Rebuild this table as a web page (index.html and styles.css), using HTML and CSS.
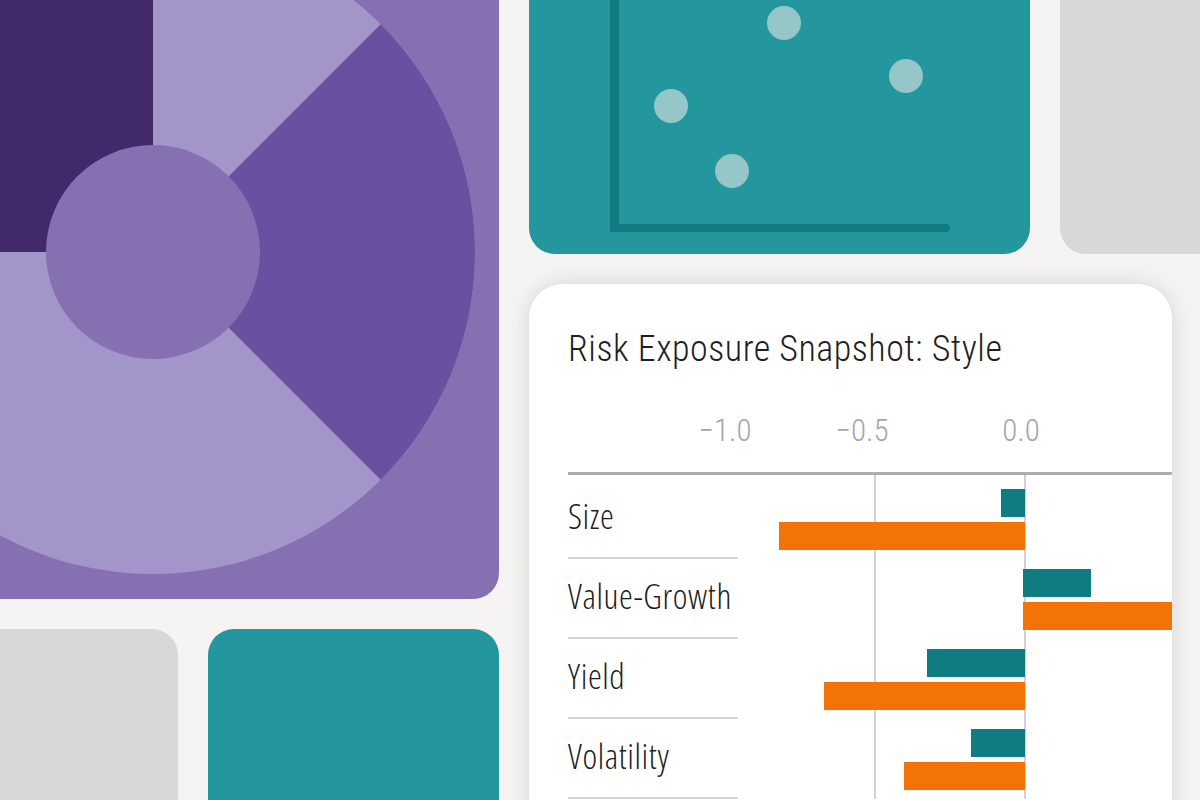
FILE: index.html
```html
<!DOCTYPE html>
<html lang="en">
<head>
<meta charset="utf-8">
<title>Risk Exposure Snapshot</title>
<link rel="stylesheet" href="styles.css">
</head>
<body>
<div class="mosaic">
  <div class="col-left">
    <div class="tile tile-purple">
      <svg class="pie" width="539" height="639" viewBox="0 0 539 639" aria-hidden="true">
        <circle cx="193" cy="292" r="322" fill="#a395c9"/>
        <path d="M193 292 L-129 292 A322 322 0 0 1 193 -30 Z" fill="#42296a"/>
        <path d="M193 292 L420.7 64.3 A322 322 0 0 1 420.7 519.7 Z" fill="#6b4fa1"/>
        <circle cx="193" cy="292" r="107" fill="#8670b2"/>
      </svg>
    </div>
    <div class="row-bottom">
      <div class="tile tile-gray tile-gray-sm"></div>
      <div class="tile tile-teal tile-teal-sm"></div>
    </div>
  </div>
  <div class="col-right">
    <div class="row-top">
      <div class="tile tile-teal tile-scatter">
        <svg class="scatter" width="501" height="294" viewBox="0 0 501 294" aria-hidden="true">
          <rect x="81" y="264" width="340" height="8" rx="4" fill="#107c82"/>
          <rect x="81" y="0" width="9" height="272" fill="#107c82"/>
          <circle cx="255" cy="63" r="17" fill="#95c6c8"/>
          <circle cx="377" cy="116" r="17" fill="#95c6c8"/>
          <circle cx="142" cy="146" r="17" fill="#95c6c8"/>
          <circle cx="203" cy="211" r="17" fill="#95c6c8"/>
        </svg>
      </div>
      <div class="tile tile-gray tile-gray-top"></div>
    </div>
    <section class="card">
      <h1 class="card-title">Risk Exposure Snapshot: Style</h1>
      <div class="chart">
        <div class="axis">
          <span class="tick tick-1">&minus;1.0</span>
          <span class="tick tick-2">&minus;0.5</span>
          <span class="tick tick-3">0.0</span>
        </div>
        <div class="rows">
          <div class="row">
            <div class="label">Size</div>
            <div class="bars">
              <div class="bar bar-a" style="--lo:-0.08;--hi:0"></div>
              <div class="bar bar-b" style="--lo:-0.815;--hi:0"></div>
            </div>
          </div>
          <div class="row">
            <div class="label">Value-Growth</div>
            <div class="bars">
              <div class="bar bar-a" style="--lo:-0.006;--hi:0.22"></div>
              <div class="bar bar-b" style="--lo:-0.006;--hi:0.6"></div>
            </div>
          </div>
          <div class="row">
            <div class="label">Yield</div>
            <div class="bars">
              <div class="bar bar-a" style="--lo:-0.325;--hi:0"></div>
              <div class="bar bar-b" style="--lo:-0.667;--hi:0"></div>
            </div>
          </div>
          <div class="row">
            <div class="label">Volatility</div>
            <div class="bars">
              <div class="bar bar-a" style="--lo:-0.18;--hi:0"></div>
              <div class="bar bar-b" style="--lo:-0.4;--hi:0"></div>
            </div>
          </div>
        </div>
      </div>
    </section>
  </div>
</div>
</body>
</html>
```
FILE: styles.css
```css
html, body {
  margin: 0;
  padding: 0;
}
body {
  width: 1200px;
  height: 800px;
  overflow: hidden;
  background: #f5f4f2;
  font-family: "Roboto Condensed", "Liberation Sans Narrow", "DejaVu Sans", sans-serif;
  font-weight: 300;
  color: #222;
}

.mosaic {
  display: flex;
  gap: 30px;
  margin: -40px 0 0 -40px;
}

.tile {
  border-radius: 26px;
  overflow: hidden;
  flex: none;
}
.tile-purple { background: #8670b2; }
.tile-teal { background: #24979e; }
.tile-gray { background: #d9d8d6; }

.col-left {
  display: flex;
  flex-direction: column;
  gap: 30px;
  width: 539px;
  flex: none;
}
.tile-purple {
  width: 539px;
  height: 639px;
}
.pie, .scatter { display: block; }

.row-bottom {
  display: flex;
  gap: 30px;
}
.tile-gray-sm { width: 218px; height: 300px; }
.tile-teal-sm { width: 291px; height: 300px; }

.col-right {
  display: flex;
  flex-direction: column;
  gap: 30px;
  flex: none;
}
.row-top {
  display: flex;
  gap: 30px;
}
.tile-scatter { width: 501px; height: 294px; }
.tile-gray-top { width: 220px; height: 294px; }

.card {
  width: 604px;
  height: 600px;
  padding: 43px 0 0 39px;
  background: #fff;
  border-radius: 34px;
  box-shadow: 0 0 22px rgba(0, 0, 0, 0.13);
  overflow: hidden;
}
.card-title {
  margin: 0;
  font-size: 36px;
  line-height: 44px;
  font-weight: 300;
  letter-spacing: 0.5px;
  color: #1f1f1f;
  white-space: nowrap;
}

.chart {
  --zero: 287px;
  --scale: 302px;
  margin-top: 42px;
}
.axis {
  display: flex;
  height: 59px;
  border-bottom: 3px solid #adadad;
  font-size: 31px;
  line-height: 36px;
  color: #a6a6a6;
}
.tick {
  width: 60px;
  text-align: center;
  flex: none;
}
.tick-1 { margin-left: 127px; }
.tick-2 { margin-left: 77px; }
.tick-3 { margin-left: 99px; }

.rows {
  padding-top: 4px;
  background:
    linear-gradient(#d2d2d2, #d2d2d2) 306px 0 / 2px 100% no-repeat,
    linear-gradient(#d2d2d2, #d2d2d2) 456px 0 / 2px 100% no-repeat;
}
.row {
  display: grid;
  grid-template-columns: 170px 1fr;
  height: 80px;
}
.label {
  display: flex;
  align-items: center;
  padding-bottom: 4px;
  border-bottom: 2px solid #d4d4d4;
  font-family: "Open Sans", "Roboto Condensed", sans-serif;
  font-stretch: 75%;
  font-size: 35px;
  line-height: 40px;
  font-weight: 300;
  letter-spacing: 0.6px;
  color: #1f1f1f;
  white-space: nowrap;
}
.bars {
  display: flex;
  flex-direction: column;
  gap: 5px;
  padding-top: 10px;
}
.bar {
  height: 28px;
  margin-left: calc(var(--zero) + var(--lo) * var(--scale));
  width: calc((var(--hi) - var(--lo)) * var(--scale));
}
.bar-a { background: #0f7c82; }
.bar-b { background: #f47306; }
```
